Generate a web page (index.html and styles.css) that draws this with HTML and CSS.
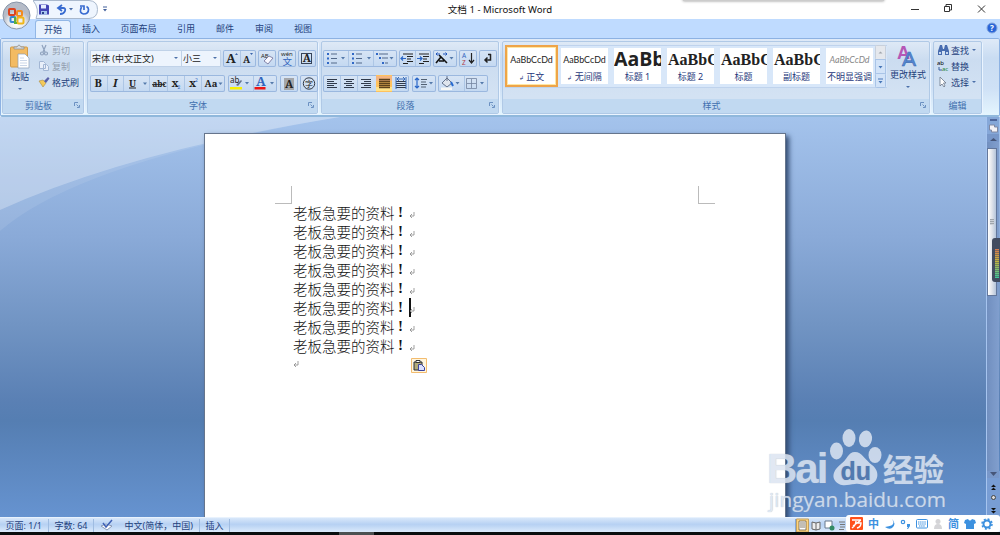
FILE: index.html
```html
<!DOCTYPE html>
<html lang="zh-CN">
<head>
    <meta charset="UTF-8">
    <meta name="viewport" content="width=device-width, initial-scale=1.0">
    <title>文档 1 - Microsoft Word</title>
    <link rel="stylesheet" href="styles.css">
</head>
<body>
<div class="window">
    <header class="titlebar">
        <div class="quick-access">
            <svg width="65" height="19" viewBox="0 0 65 19">
                <path d="M0 .5H56Q64.500 1 64.500 9.500T56 18.500H3Q7 9 0 .5Z" fill="#eef5fe" stroke="#a9b8cc"/>
                <path d="M6 4.500h8l2 1v9H6Z" fill="#4546b5"/><path d="M8 5h5v3.500H8Z" fill="#e8efff"/><path d="M8 11h6v3.500H8Z" fill="#a8c7ef"/><path d="M9 12h2v2H9Z" fill="#273e8b"/>
                <path d="M25 8h5q3 0 2 3t-5 3M29 5l-4 3 4 3" fill="none" stroke="#386bd0" stroke-width="1.800"/>
                <path d="m36 8 4 0-2 2.500Z" fill="#4a6da8"/>
                <path d="M48.500 7q-3 6 2 7 5 0 5-4.500 0-2-2-3M47 6h4v4" fill="none" stroke="#386bd0" stroke-width="1.700"/>
            </svg>
            <svg width="16" height="19" viewBox="0 0 16 19"><path d="M5 7h4" stroke="#42609b"/><path d="M5 9h4l-2 2.500Z" fill="#42609b"/></svg>
        </div>
        <h1 class="title">文档 1 - Microsoft Word</h1>
        <div class="window-buttons">
            <svg width="100" height="19" viewBox="0 0 100 19" fill="none" stroke="#333">
                <path d="M11 9.500h8M44.500 6.500h5v5h-5ZM46 6V4.500h5.500V10H50M78 5.500l7 7M85 5.500l-7 7"/>
            </svg>
        </div>
        <div class="floating-edge"></div>
    </header>

    <nav class="tabs">
        <a class="tab active">开始</a><a class="tab">插入</a><a class="tab wide">页面布局</a><a class="tab">引用</a><a class="tab">邮件</a><a class="tab">审阅</a><a class="tab">视图</a>
        <svg class="help" width="12" height="12" viewBox="0 0 12 12"><circle cx="6" cy="6" r="5" fill="#2864d8" stroke="#83a5dd"/><text x="6" y="9" text-anchor="middle" class="help-mark">?</text></svg>
    </nav>
    <svg class="office-button" width="34" height="32" viewBox="0 0 34 32">
        <defs><radialGradient id="orb" cx=".5" cy=".8"><stop offset="0" stop-color="#fff"/><stop offset=".65" stop-color="#e3e6eb"/><stop offset="1" stop-color="#b6bcc8"/></radialGradient></defs>
        <circle cx="16.500" cy="15.500" r="13.500" fill="url(#orb)" stroke="#8996aa"/>
        <g fill="none" stroke-width="2">
            <rect x="9" y="9" width="6" height="6" rx="1" stroke="#dc4420"/>
            <rect x="17" y="11" width="5" height="5" rx="1" stroke="#f28a20"/>
            <rect x="10.500" y="17" width="5" height="5" rx="1" stroke="#3789d5"/>
            <rect x="17.500" y="17.500" width="6" height="6" rx="1" stroke="#efb71a"/>
            <path d="M15 17v6h2" stroke="#5eb13c"/>
        </g>
    </svg>

    <section class="ribbon">
        <div class="group clipboard">
            <div class="group-body">
                <div class="big-button paste">
                    <svg width="22" height="26" viewBox="0 0 22 26">
                        <rect x="1.500" y="3" width="17" height="20" rx="1" fill="#f3bb62" stroke="#d09a49"/>
                        <path d="M5 5V3h3q2-4 4 0h3v2Z" fill="#d7d9dc" stroke="#87898d" stroke-width=".7"/>
                        <path d="M9 10h7l4 4v10H9Z" fill="#fff" stroke="#8a9db8" stroke-width=".7"/>
                        <path d="M11 14h4m-4 2.500h7m-7 2.500h7m-7 2.500h7" stroke="#bdcce2" stroke-width=".8"/>
                    </svg>
                    <span>粘贴</span><i class="arrow"></i>
                </div>
                <ul class="commands">
                    <li class="disabled"><svg width="12" height="12" viewBox="0 0 12 12" fill="none" stroke="#8fa2bd" stroke-width="1.200"><path d="M4 1l3 7M8 1 5 8"/><circle cx="4" cy="9.500" r="1.500"/><circle cx="8" cy="9.500" r="1.500"/></svg>剪切</li>
                    <li class="disabled"><svg width="12" height="12" viewBox="0 0 12 12" fill="#e8effa" stroke="#a2b6d4"><path d="M1.500 1.500h4l2 2v5h-6ZM5.500 4.500h3l2 2v4h-5Z"/></svg>复制</li>
                    <li><svg width="12" height="12" viewBox="0 0 12 12"><path d="M1 5l4-1 3 3-3 4q-2-3-4-6Z" fill="#f4c958" stroke="#a98b43" stroke-width=".6"/><path d="M6 5l4-4 1.500 1.500L8 7Z" fill="#5960a8"/></svg>格式刷</li>
                </ul>
            </div>
            <div class="group-label">剪贴板<svg class="launcher" width="6" height="6" viewBox="0 0 6 6"><path d="M.5 4V.5H4M2.500 2.500l2 2M5.500 3v2.500H3"/></svg></div>
        </div>

        <div class="group font">
            <div class="group-body rows">
                <div class="row tight">
                    <div class="combo font-name">宋体 (中文正文)<i class="arrow"></i></div>
                    <div class="combo font-size">小三<i class="arrow"></i></div>
                    <svg class="tools" width="33" height="17" viewBox="0 0 33 17"><text x="3" y="12.500" class="serif s11">A</text><path d="m12 5 1.500-2L15 5Z" fill="#3b65ac"/><path d="M17.500 1v15" class="sep"/><text x="20" y="12.500" class="serif s9">A</text><path d="m27 3 1.500 2L30 3Z" fill="#3b65ac"/></svg>
                    <svg class="tools" width="18" height="17" viewBox="0 0 18 17"><text x="3" y="7.500" class="s6">AB</text><path d="m6 11 5-5 4 2-5 6Z" fill="#f8f8ff" stroke="#8385a9"/></svg>
                    <svg class="tools" width="18" height="17" viewBox="0 0 18 17"><text x="3" y="6" class="s6">wén</text><text x="4.500" y="14.500" class="cjk blue s9">文</text></svg>
                    <svg class="tools" width="18" height="17" viewBox="0 0 18 17"><rect x="3.500" y="3.500" width="10" height="10" fill="none" stroke="#364459"/><text x="4.800" y="12" class="serif s10">A</text></svg>
                </div>
                <div class="row">
                    <svg class="tools" width="135" height="17" viewBox="0 0 135 17">
                        <path d="M17.500 1v15M33.500 1v15M59.500 1v15M77.500 1v15M94.500 1v15M111.500 1v15" class="sep"/>
                        <text x="4.500" y="12" class="serif s10">B</text><text x="23" y="12" class="serif s10 italic">I</text><text x="39" y="11.500" class="serif s9">U</text><path d="M39 13h7" stroke="#222"/><path d="m53 7.500 4 0-2 2.500Z" class="caret"/>
                        <text x="62.500" y="11.500" class="serif s8">abc</text><path d="M62 9.500h13" stroke="#222" stroke-width=".8"/>
                        <text x="81.500" y="12" class="serif s10">x</text><text x="87.500" y="14" class="blue s5">2</text>
                        <text x="99" y="12" class="serif s10">x</text><text x="105" y="7" class="blue s5">2</text>
                        <text x="114.500" y="12" class="serif s9">Aa</text><path d="m128.500 7.500 4 0-2 2.500Z" class="caret"/>
                    </svg>
                    <svg class="tools" width="49" height="17" viewBox="0 0 49 17">
                        <path d="M25.500 1v15" class="sep"/><text x="2" y="8" class="s8">ab</text><path d="m8 10 5-5 1 1-4 5Z" fill="#64738b"/><path d="M2 12h12v2.500H2Z" fill="#f6f000"/><path d="m17 7 4 0-2 2.500Z" class="caret"/>
                        <text x="28" y="11" class="serif blue s11">A</text><path d="M26.500 12h11v2.500h-11Z" fill="#ed1515"/><path d="m42 7 4 0-2 2.500Z" class="caret"/>
                    </svg>
                    <svg class="tools" width="18" height="17" viewBox="0 0 18 17"><path d="M4 3h10v12H4Z" fill="#a4a6aa"/><text x="5" y="12.500" class="serif s10">A</text></svg>
                    <svg class="tools last" width="18" height="17" viewBox="0 0 18 17"><circle cx="9" cy="8.500" r="5.700" fill="none" stroke="#303846"/><text x="5" y="11.500" class="cjk s8">字</text></svg>
                </div>
            </div>
            <div class="group-label">字体<svg class="launcher" width="6" height="6" viewBox="0 0 6 6"><path d="M.5 4V.5H4M2.500 2.500l2 2M5.500 3v2.500H3"/></svg></div>
        </div>

        <div class="group paragraph">
            <div class="group-body rows">
                <div class="row tight">
                    <svg class="tools" width="74" height="17" viewBox="0 0 74 17">
                        <path d="M25.500 1v15M50.500 1v15" class="sep"/>
                        <path d="M4 4h2m-2 4.500h2M4 13h2M29 4h2m-2 4.500h2M29 13h2M53 4h2m1 4h2m1 5h2" stroke="#3168c6" stroke-width="2"/>
                        <path d="M8 4h6M8 8.500h6M8 13h6M33 4h6m-6 4.500h6M33 13h6M56 4h9m-6 4h6m-3 5h3" stroke="#526889"/>
                        <path d="m18 7 4 0-2 2.500ZM44 7h4l-2 2.500ZM66.500 7h4l-2 2.500Z" class="caret"/>
                    </svg>
                    <svg class="tools" width="32" height="17" viewBox="0 0 32 17"><path d="M16.500 1v15" class="sep"/><path d="M4 4h10M8 6.500h6M8 9h4m-4 2.500h6M4 13.500h5M20 4h10m-6 2.500h6M24 9h4m-4 2.500h6M20 13.500h5" stroke="#222" stroke-width="1.200"/><path d="M7 8.500H2m2-2-2 2 2 2M18 8.500h5m-2-2 2 2-2 2" fill="none" stroke="#2865c7" stroke-width="1.200"/></svg>
                    <svg class="tools" width="24" height="17" viewBox="0 0 24 17"><path d="m3 13 5-6 6 6M8 7 6 5M6 11h5" fill="none" stroke="#111" stroke-width="1.600"/><path d="M7 4H3m1.500-1.500L3 4l1.500 1.500M10 4h4m-1.500-1.500L14 4l-1.500 1.500" stroke="#2357bc" fill="none"/><path d="m16.500 7 4 0-2 2.500Z" class="caret"/></svg>
                    <svg class="tools" width="18" height="17" viewBox="0 0 18 17"><text x="3" y="8" class="blue s7">A</text><text x="3" y="15" class="red s7">Z</text><path d="M12.500 3v10m-2.500-3 2.500 3 2.500-3" fill="none" stroke="#222" stroke-width="1.200"/></svg>
                    <svg class="tools" width="18" height="17" viewBox="0 0 18 17"><path d="M11.500 4v6H6m2.500-2.500L6 10l2.500 2.500M9 4.500h3" fill="none" stroke="#222" stroke-width="1.500"/></svg>
                </div>
                <div class="row">
                    <svg class="tools" width="86" height="17" viewBox="0 0 86 17">
                        <path d="M17.500 1v15M34.500 1v15" class="sep"/><path d="M53 0h16v17H53Z" fill="#ffc25e"/><path d="M53 1h16v5H53Z" fill="#f4b580"/><path d="M53 12h16v4H53Z" fill="#ffe38b"/>
                        <path d="M4 4.500h10M4 6.500h7M4 8.500h10M4 10.500h7M4 12.500h10M21 4.500h10M23 6.500h6M21 8.500h10M23 10.500h6M21 12.500h10M38 4.500h10M41 6.500h7M38 8.500h10M41 10.500h7M38 12.500h10M73 6.500h10M73 8.500h10M73 10.500h10M73 12.500h10" stroke="#303a4b"/>
                        <path d="M56 4.500h11m-11 2h11m-11 2h11m-11 2h11m-11 2h11" stroke="#5c421c" stroke-width="1.300"/>
                        <path d="M73 2v12M83 2v12M74 4h8M76 2l-2 2 2 2M80 2l2 2-2 2" fill="none" stroke="#376ab9"/>
                    </svg>
                    <svg class="tools" width="24" height="17" viewBox="0 0 24 17"><path d="M5 3v10M3 5l2-2 2 2M3 11l2 2 2-2" fill="none" stroke="#2865c7" stroke-width="1.200"/><path d="M9 4.500h6m-6 2.500h5m-5 2.500h6M9 12h5" stroke="#526173" stroke-width="1.200"/><path d="m17 7 4 0-2 2.500Z" class="caret"/></svg>
                    <svg class="tools last" width="50" height="17" viewBox="0 0 50 17"><path d="M26.500 1v15" class="sep"/><path d="m4 8 5-5 5 5-5 4Z" fill="#dfe5ed" stroke="#64738c"/><path d="M9 1v5" stroke="#64738c"/><path d="m13 7 2 4" stroke="#2468d0" stroke-width="2"/><path d="M3 12.500h11v2.500H3Z" fill="#f7f7f4"/><path d="m17.500 7 4 0-2 2.500ZM42 7h4l-2 2.500Z" class="caret"/><path d="M28.500 3.500h10v10h-10ZM33.500 4v9M29 8.500h9" fill="none" stroke="#7484a0" stroke-width=".8"/></svg>
                </div>
            </div>
            <div class="group-label">段落<svg class="launcher" width="6" height="6" viewBox="0 0 6 6"><path d="M.5 4V.5H4M2.500 2.500l2 2M5.500 3v2.500H3"/></svg></div>
        </div>

        <div class="group styles">
            <div class="group-body">
                <div class="gallery">
                    <div class="style selected"><b>AaBbCcDd</b><span><small>↲</small> 正文</span></div>
                    <div class="style"><b>AaBbCcDd</b><span><small>↲</small> 无间隔</span></div>
                    <div class="style heading1"><b>AaBb</b><span>标题 1</span></div>
                    <div class="style heading"><b>AaBbC</b><span>标题 2</span></div>
                    <div class="style heading"><b>AaBbC</b><span>标题</span></div>
                    <div class="style heading"><b>AaBbC</b><span>副标题</span></div>
                    <div class="style subtle"><b>AaBbCcDd</b><span>不明显强调</span></div>
                    <svg class="gallery-scroll" width="11" height="43" viewBox="0 0 11 43"><rect x=".5" y=".5" width="10" height="14" rx="1" fill="#e5e8ed" stroke="#c8d0db"/><rect x=".5" y="14.500" width="10" height="14" fill="#d2e3f8" stroke="#a9c4e7"/><rect x=".5" y="28.500" width="10" height="14" rx="1" fill="#d2e3f8" stroke="#a9c4e7"/><path d="m3.500 8.500 2-2 2 2Z" fill="#a2a6ad"/><path d="M3.500 21h4l-2 2.500ZM3.500 36h4l-2 2.500ZM3 33.500h5v1H3Z" fill="#4877b8"/></svg>
                </div>
                <div class="big-button change">
                    <svg width="24" height="25" viewBox="0 0 24 25"><text x="1" y="15" class="letter-a pink">A</text><text x="6" y="22" class="letter-a large">A</text></svg>
                    <span>更改样式</span><i class="arrow"></i>
                </div>
            </div>
            <div class="group-label">样式<svg class="launcher" width="6" height="6" viewBox="0 0 6 6"><path d="M.5 4V.5H4M2.500 2.500l2 2M5.500 3v2.500H3"/></svg></div>
        </div>

        <div class="group editing">
            <div class="group-body">
                <ul class="commands">
                    <li><svg width="13" height="12" viewBox="0 0 13 12"><path d="M3 1h2l1 4h1l1-4h2l2 6v4H8V7H5v4H1V7Z" fill="#486caf"/><path d="M2 8h2v2H2Zm7 0h2v2H9Z" fill="#c5d8f1"/></svg>查找<i class="arrow"></i></li>
                    <li><svg width="13" height="12" viewBox="0 0 13 12"><text x="0" y="5" class="s6">ab</text><text x="5" y="11" class="green s6">ac</text><path d="M2 7v3h3" fill="none" stroke="#385f9f"/></svg>替换</li>
                    <li><svg width="13" height="12" viewBox="0 0 13 12"><path d="M3 1v9l2-2 2 3 1-1-1.500-3H9Z" fill="#fff" stroke="#6b7688" stroke-width=".8"/></svg>选择<i class="arrow"></i></li>
                </ul>
            </div>
            <div class="group-label">编辑</div>
        </div>
    </section>

    <main class="workspace">
        <svg class="swoosh" width="360" height="120" viewBox="0 0 360 120"><path d="M0 0H340Q130 34 0 93Z" fill="#fff" opacity=".27"/><path d="M0 0H340Q80 44 0 114Z" fill="#fff" opacity=".09"/></svg>
        <article class="page">
            <div class="margins"><i class="corner left"></i><i class="corner right"></i></div>
            <div class="text">
                <p>老板急要的资料<em>!</em><svg class="return" width="6" height="7" viewBox="0 0 6 7"><path d="M5 0v4H1m2-2L1 4l2 2"/></svg></p>
                <p>老板急要的资料<em>!</em><svg class="return" width="6" height="7" viewBox="0 0 6 7"><path d="M5 0v4H1m2-2L1 4l2 2"/></svg></p>
                <p>老板急要的资料<em>!</em><svg class="return" width="6" height="7" viewBox="0 0 6 7"><path d="M5 0v4H1m2-2L1 4l2 2"/></svg></p>
                <p>老板急要的资料<em>!</em><svg class="return" width="6" height="7" viewBox="0 0 6 7"><path d="M5 0v4H1m2-2L1 4l2 2"/></svg></p>
                <p>老板急要的资料<em>!</em><svg class="return" width="6" height="7" viewBox="0 0 6 7"><path d="M5 0v4H1m2-2L1 4l2 2"/></svg></p>
                <p class="current">老板急要的资料<em>!</em><svg class="return" width="6" height="7" viewBox="0 0 6 7"><path d="M5 0v4H1m2-2L1 4l2 2"/></svg></p>
                <p>老板急要的资料<em>!</em><svg class="return" width="6" height="7" viewBox="0 0 6 7"><path d="M5 0v4H1m2-2L1 4l2 2"/></svg></p>
                <p>老板急要的资料<em>!</em><svg class="return" width="6" height="7" viewBox="0 0 6 7"><path d="M5 0v4H1m2-2L1 4l2 2"/></svg></p>
                <p class="end"><svg class="return" width="6" height="7" viewBox="0 0 6 7"><path d="M5 0v4H1m2-2L1 4l2 2"/></svg></p>
            </div>
            <svg class="paste-options" width="16" height="15" viewBox="0 0 16 15"><path d="M.5.5h15v14H.5Z" fill="#fff6df" stroke="#f3bc6f"/><path d="M3 4h8v8H3Z" fill="#b3aa78" stroke="#292d38"/><path d="M5 2.500h4v2H5Z" fill="#fff" stroke="#333"/><path d="M7.500 6.500h3l3 3v3h-6Z" fill="#dbe0ff" stroke="#3b439e"/></svg>
        </article>
        <aside class="scrollbar">
            <svg width="13" height="25" viewBox="0 0 13 25"><path d="M3 2h7v2H3Z" fill="#4e659a"/><path d="M2.500 8h5v2h3v5h-6v-2h-2Z" fill="#f4f2f6" stroke="#8189a3"/><path d="M0 17h12v8H0Z" fill="#7897c9"/><path d="m3 24 3.500-3 3.500 3Z" fill="#465679"/></svg>
            <div class="track"><div class="thumb"><i></i></div></div>
            <svg width="13" height="46" viewBox="0 0 13 46"><path d="M0 0h12v7H0Z" fill="#7897c9"/><path d="M3 1h7L6.500 5Z" fill="#465679"/><path d="m4 16 2.500-2.500L9 16Zm0 3 2.500-2.500L9 19Z" fill="#111"/><circle cx="6.500" cy="26.500" r="2" fill="#ddd" stroke="#444"/><path d="M4 37h5l-2.500 2.500ZM4 40h5l-2.500 2.500Z" fill="#111"/></svg>
        </aside>
        <div class="meter"><i></i></div>
    </main>

    <footer class="status">
        <span>页面: 1/1</span><span>字数: 64</span>
        <span class="language"><svg width="13" height="12" viewBox="0 0 13 12"><path d="m1 7 5-2 6 2-5 4Z" fill="#fff" stroke="#8a9bb8"/><path d="m3 4 3 4 6-7" fill="none" stroke="#3f61b5" stroke-width="1.500"/></svg>中文(简体，中国)</span>
        <span>插入</span>
        <svg class="views" width="53" height="14" viewBox="0 0 53 14"><path d="M.5 1v13" stroke="#88a8d5"/><path d="M1.500 1h12v13h-12Z" fill="#ffd47d" stroke="#c4a15e"/><path d="M4 3h7v9H4ZM5 5h5M5 7h5M5 9h5" fill="#fff" stroke="#6b5d48" stroke-width=".8"/><path d="m17 4 4 1 4-1v7l-4 1-4-1Zm4 1v7" fill="#eee" stroke="#666"/><path d="M30 3h7v7h-7Z" fill="#fff" stroke="#68788d"/><circle cx="37" cy="10" r="2.500" fill="#328b66"/><path d="M44 4h6m-5 2.500h5m-5 2.500h5m-6 2.500h5" stroke="#777"/></svg>
    </footer>
    <div class="taskbar"><i></i></div>

    <div class="watermark">
        <div class="brand"><span class="bai">Bai</span>
            <svg width="54" height="58" viewBox="0 0 54 58"><g fill="#dce5f2"><ellipse cx="8.500" cy="22" rx="6.500" ry="8.500"/><ellipse cx="21" cy="9" rx="6.500" ry="9"/><ellipse cx="37.500" cy="10" rx="6.500" ry="8.500" transform="rotate(10 38 10)"/><ellipse cx="47" cy="26" rx="6.500" ry="8"/><path d="M27 23C34 23 37 31 44 36 53 43 50 54 41 56 36 57 32 54 27 55 21 55 17 58 11 55 2 50 5 41 13 35 19 31 20 23 27 23Z"/></g><text x="12.500" y="51" class="du">du</text></svg>
            <span class="experience">经验</span></div>
        <div class="address">jingyan.baidu.com</div>
    </div>

    <div class="ime">
        <svg width="13" height="13" viewBox="0 0 13 13"><rect width="13" height="13" rx="1" fill="#ff501b"/><path d="M2 3h9M6 4Q6 8 2 11M5 6h6q0 4-4 5M11 3 3 9" fill="none" stroke="#fff" stroke-width="1.400"/></svg>
        <span>中</span>
        <svg width="11" height="12" viewBox="0 0 11 12"><path d="M8 1q5 7-7 8 4 3 7 1 5-4 0-9Z" fill="#3d91df"/></svg>
        <svg width="11" height="12" viewBox="0 0 11 12"><circle cx="3" cy="4" r="1.700" fill="none" stroke="#3d91df" stroke-width="1.200"/><path d="M7 6h3v2L8 11H7l1-2H7Z" fill="#3d91df"/></svg>
        <svg width="12" height="12" viewBox="0 0 12 12" fill="none" stroke="#3d91df"><rect x=".5" y="1.500" width="11" height="8.500" rx="1"/><path d="M2 4h8M2 6h8M3 8h6" stroke-dasharray="1.500 .6"/></svg>
        <svg width="10" height="12" viewBox="0 0 10 12" fill="#d4d4d7"><circle cx="5" cy="3.500" r="2.500"/><path d="M1 11q0-5 4-5t4 5Z"/></svg>
        <span>简</span>
        <svg width="12" height="12" viewBox="0 0 12 12"><path d="m4 1-3 1-1 3 2 1v5h8V6l2-1-1-3-3-1Q6 4 4 1Z" fill="#3d91df"/></svg>
        <svg width="12" height="12" viewBox="0 0 12 12" fill="none" stroke="#3d91df"><circle cx="6" cy="6" r="3.500" stroke-width="2"/><circle cx="6" cy="6" r="5" stroke-width="1.500" stroke-dasharray="2 1.930"/></svg>
    </div>
</div>
</body>
</html>
```
FILE: styles.css
```css
* {
    box-sizing: border-box;
}
body {
    margin: 0;
    font-family: "Noto Sans", "Noto Sans CJK SC", sans-serif;
    font-size: 9px;
    color: #1e3f7c;
}
svg {
    display: block;
    flex: none;
}
.window {
    position: relative;
    width: 1000px;
    height: 535px;
    display: flex;
    flex-direction: column;
    overflow: hidden;
}
.titlebar {
    height: 19px;
    flex: none;
    display: grid;
    grid-template-columns: 1fr auto 1fr;
    position: relative;
    background: #fff;
}
.quick-access {
    display: flex;
    padding-left: 33px;
}
.title {
    margin: 0;
    font-size: 9.6px;
    line-height: 19px;
    font-weight: normal;
    color: #111;
}
.window-buttons {
    display: flex;
    justify-content: flex-end;
}
.floating-edge {
    position: absolute;
    left: 683px;
    top: -4px;
    width: 201px;
    height: 5px;
    background: #ccc;
    box-shadow: 0 0 3px #888;
}
.tabs {
    height: 19px;
    flex: none;
    display: flex;
    align-items: flex-end;
    padding-left: 35px;
    background: #bfdbff;
}
.tab {
    width: 36px;
    height: 18px;
    line-height: 18px;
    text-align: center;
    margin-right: 3px;
}
.tab.wide {
    width: 53px;
}
.tab.active {
    margin-right: 2px;
    background: #e8f2fe;
    border: 1px solid #92b7e6;
    border-bottom: 0;
    border-radius: 3px 3px 0 0;
    line-height: 17px;
}
.help {
    margin: 0 2px 4px auto;
}
.help-mark {
    fill: #fff;
    font-size: 8px;
    font-weight: bold;
}
.office-button {
    position: absolute;
    left: 0;
    top: 0;
}
.ribbon {
    height: 79px;
    flex: none;
    display: flex;
    gap: 3px;
    padding: 2px 1px 1px;
    border: 1px solid #8db2e3;
    border-bottom: 2px solid #90b8dc;
    border-radius: 2px;
    background: linear-gradient(#dfeaf8, #c9dcf2 25%, #cfe1f6 65%, #e4f5fe);
}
.group {
    border: 1px solid #b0c9e6;
    border-radius: 2px;
    display: flex;
    flex-direction: column;
    background: linear-gradient(#dee9f6, #cbdcf0 25%, #d3e2f3 75%);
    box-shadow: 1px 1px 0 #eaf4ff;
}
.clipboard { width: 82px; }
.font { width: 231px; }
.paragraph { width: 178px; }
.styles { width: 428px; }
.editing { width: 49px; }
.group-body {
    flex: 1;
    display: flex;
}
.group-label {
    height: 14px;
    line-height: 13px;
    background: #c1d9f1;
    color: #4270ae;
    text-align: center;
    display: flex;
    justify-content: center;
}
.launcher {
    margin: 3px 3px 0 auto;
    fill: none;
    stroke: #6c91c2;
}
.group-label:has(.launcher)::before {
    content: "";
    margin-right: auto;
}
.arrow {
    display: inline-block;
    border: 2px solid transparent;
    border-top: 2.5px solid #4c70a9;
    border-bottom: 0;
}
.big-button {
    display: flex;
    flex-direction: column;
    align-items: center;
    line-height: 12px;
}
.paste {
    width: 34px;
    padding-top: 2px;
}
.paste span {
    margin-top: 1px;
}
.paste .arrow,
.change .arrow {
    margin-top: 5px;
}
.commands {
    list-style: none;
    margin: 0;
    padding: 0;
}
.commands li {
    height: 16px;
    display: flex;
    align-items: center;
    gap: 2px;
}
.commands .disabled {
    color: #929eaf;
}
.commands .arrow {
    margin-left: 2px;
}
.clipboard .commands {
    padding-left: 1px;
}
.editing .commands {
    padding-left: 3px;
}
.editing .commands li {
    gap: 1px;
}
.rows {
    flex-direction: column;
    gap: 8px;
    padding: 8px 1px 0;
}
.font .rows {
    padding-left: 2px;
}
.row {
    height: 17px;
    display: flex;
    gap: 3px;
}
.row.tight {
    gap: 2px;
}
.combo {
    flex: none;
    display: flex;
    align-items: center;
    justify-content: space-between;
    height: 17px;
    padding: 0 3px 1px 1px;
    background: #edf4fd;
    border: 1px solid #c0d2e8;
    color: #222;
}
.font-name { width: 92px; }
.font-size {
    width: 40px;
    margin-left: -3px;
}
.tools {
    border-radius: 2px;
    background: linear-gradient(#d8e5f5, #c3d8f1);
    box-shadow: inset 0 0 0 1px #9bb8df;
}
.tools.last {
    margin-left: -1px;
}
.sep {
    stroke: #adc6e5;
}
.caret {
    fill: #557aab;
}
.serif {
    font-family: "Noto Serif", "Liberation Serif", serif;
    font-weight: bold;
}
.cjk { font-family: "Noto Sans CJK SC", sans-serif; }
.italic { font-style: italic; }
.tools text { fill: #222; }
.tools .blue { fill: #3265bd; }
.tools .red { fill: #b13d49; }
.green { fill: #158333; }
.s5 { font-size: 5px; }
.s6 { font-size: 6px; }
.s7 { font-size: 6.5px; }
.s8 { font-size: 8px; }
.s9 { font-size: 9.5px; }
.s10 { font-size: 11px; }
.s11 { font-size: 13px; }
.gallery {
    width: 382px;
    height: 43px;
    margin: 3px 0 0 2px;
    display: flex;
    background: #d8e7f9;
    border: 1px solid #bfd3ed;
    border-right: 0;
}
.style {
    width: 47px;
    height: 36px;
    margin: 2px 3px 0;
    flex: none;
    overflow: hidden;
    background: #fff;
    text-align: center;
    color: #26377b;
    white-space: nowrap;
}
.style:first-child {
    margin-left: 2px;
}
.style b {
    display: block;
    height: 22px;
    font: 8.9px/23px Lato, sans-serif;
    color: #222;
}
.style span {
    display: block;
    line-height: 14px;
}
.style small {
    font-size: 6px;
}
.style.heading1 b {
    font: bold 19.5px/21px "Open Sans", sans-serif;
    text-align: left;
}
.style.heading b {
    font: bold 16px/24px "Liberation Serif", serif;
    text-align: left;
    padding-left: 1px;
}
.style.subtle b {
    font-style: italic;
    color: #888;
}
.style.selected {
    box-shadow: 0 0 0 1px #ffe7a4, 0 0 0 3px #eea449;
    z-index: 1;
}
.gallery-scroll {
    margin: -1px 0 0 -1px;
}
.change {
    width: 42px;
    padding-top: 2px;
}
.change span {
    white-space: nowrap;
}
.letter-a {
    font: bold 18px "Liberation Sans", sans-serif;
    fill: #5689d2;
}
.letter-a.pink {
    fill: #b557b6;
}
.letter-a.large {
    font-size: 21px;
    font-weight: normal;
    stroke: #3b69b4;
    stroke-width: .6px;
}
.workspace {
    height: 400px;
    flex: none;
    display: flex;
    position: relative;
    padding: 16px 1px 0 204px;
    background: linear-gradient(#a4c3ec, #8aaad8 30%, #7194c3 52%, #5a80b4 71%, #557eb2 76%, #6693d0);
    overflow: hidden;
}
.swoosh {
    position: absolute;
    left: 0;
    top: 0;
}
.page {
    position: relative;
    width: 582px;
    height: 390px;
    flex: none;
    background: #fff;
    border: 1px solid #66758c;
    box-shadow: 3px 3px 5px #314a70;
}
.margins {
    display: flex;
    justify-content: space-between;
    padding: 52px 70px 0;
}
.corner {
    width: 17px;
    height: 18px;
    border: solid #bbb;
}
.corner.left {
    border-width: 0 1px 1px 0;
}
.corner.right {
    border-width: 0 0 1px 1px;
}
.text {
    margin-top: -1px;
    padding-left: 88px;
    color: #111;
    font: 300 14.5px/19px "Noto Sans CJK SC", sans-serif;
}
.text p {
    display: flex;
    align-items: center;
    height: 19px;
    margin: 0;
}
.text em {
    width: 12px;
    margin-right: 2px;
    text-align: center;
    font: bold 15px/19px "Liberation Serif", serif;
}
.return {
    fill: none;
    stroke: #888;
    stroke-width: .8;
    margin-top: 5px;
}
/* text cursor sits before the return mark */
.text .current em {
    width: 16px;
    margin-right: -2px;
    padding-right: 2px;
    border-right: 2px solid #111;
}
.text .end {
    height: 13px;
}
.paste-options {
    position: absolute;
    left: 206px;
    top: 224px;
}
.scrollbar {
    width: 13px;
    height: 400px;
    margin: -16px 0 0 auto;
    border-left: 1px solid #a6c4ef;
    background: #85a7d8;
    display: flex;
    flex-direction: column;
}
.scrollbar svg:last-child {
    background: #789dd4;
}
.track {
    flex: 1;
    padding-top: 6px;
    background: linear-gradient(90deg, #718fbf, #819fce);
}
.thumb {
    width: 10px;
    height: 148px;
    padding: 70px 2px 0;
    border: 1px solid #63779b;
    background: linear-gradient(90deg, #fff, #e3e6ec 45%, #b5c5db);
}
.thumb i {
    display: block;
    height: 6px;
    background: repeating-linear-gradient(#9fa5ac 0 1px, #cdd1d7 1px 2px);
}
.meter {
    position: absolute;
    right: -2px;
    top: 121px;
    width: 10px;
    height: 44px;
    padding: 11px 3px 4px;
    border-radius: 3px;
    background: #414b60;
}
.meter i {
    display: block;
    height: 29px;
    background: repeating-linear-gradient(transparent 0 1px, rgba(65, 75, 96, .5) 1px 2px), linear-gradient(#d47850, #c8b43c 40%, #3dc79c);
}
.status {
    height: 15px;
    flex: none;
    display: flex;
    align-items: center;
    border-top: 1px solid #e8f2fd;
    background: linear-gradient(#d8e7fa, #b7d1f3 45%, #bfd7f5 60%, #dceafb);
}
.status span {
    display: flex;
    align-items: center;
    height: 13px;
    padding: 0 6px 0 5.5px;
    border-right: 1px solid #9fbce1;
}
.status .language {
    gap: 11.5px;
}
.views {
    margin: 0 152px 0 auto;
}
.taskbar {
    height: 3px;
    background: #0a0d0e;
}
.taskbar i {
    display: block;
    width: 35px;
    height: 3px;
    margin-left: 339px;
    background: #4c5051;
}
.watermark {
    position: absolute;
    left: 767px;
    top: 429px;
    opacity: .85;
    color: #dce5f2;
    text-shadow: 0 0 1px #9facbe;
}
.brand {
    display: flex;
    height: 59px;
}
.bai {
    width: 61px;
    font: bold 42px/79px "Liberation Sans", sans-serif;
    letter-spacing: -2px;
}
.du {
    font: bold 25px "Liberation Sans", sans-serif;
    fill: #5078ae;
}
.experience {
    margin-left: 1px;
    font: bold 30.5px/79px "Noto Sans CJK SC", sans-serif;
}
.address {
    font: 20.8px/23px "Open Sans", sans-serif;
    padding-left: 2px;
}
.ime {
    position: absolute;
    left: 846px;
    top: 515px;
    width: 154px;
    height: 17px;
    display: flex;
    align-items: center;
    justify-content: space-between;
    padding: 0 7px 0 4px;
    border-radius: 3px;
    background: #fff;
    color: #3d91df;
    font-size: 11px;
    line-height: 16px;
    font-weight: bold;
}
```
